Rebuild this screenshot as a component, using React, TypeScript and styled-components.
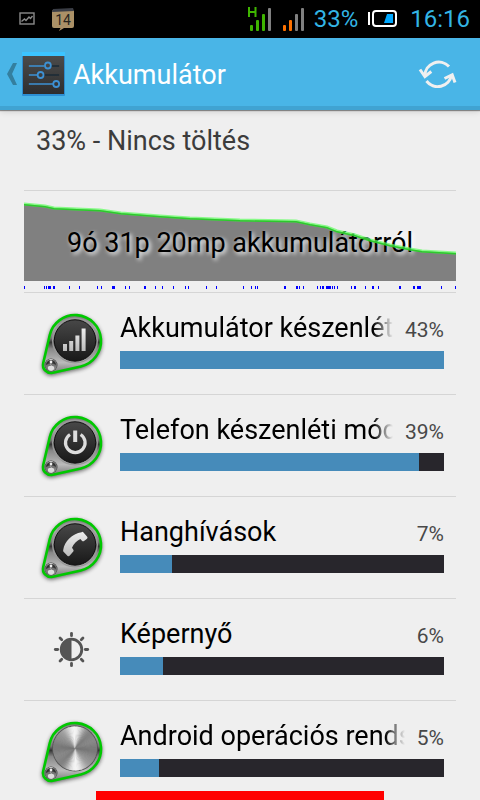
import React, { useId } from 'react';
import styled, { createGlobalStyle } from 'styled-components';

const GlobalStyle = createGlobalStyle`
  *, *::before, *::after { box-sizing: border-box; }
  body {
    margin: 0;
    background: #efefef;
    font-family: Roboto, 'Noto Sans', sans-serif;
    color: #000;
  }
`;

const Page = styled.div`
  height: 100vh;
  display: flex;
  flex-direction: column;
  overflow: hidden;
`;

const StatusBar = styled.header`
  display: flex;
  align-items: center;
  justify-content: space-between;
  flex: none;
  height: 38px;
  padding: 0 10px 0 18px;
  background: #000;
  color: #33b5e5;
  font-size: 24px;
  line-height: 40px;
`;

const StatusGroup = styled.div<{ $gap: number }>`
  display: flex;
  align-items: center;
  gap: ${(p) => p.$gap}px;
`;

const Clock = styled.time`
  margin-left: 4px;
`;

const ActionBar = styled.div`
  display: flex;
  align-items: center;
  flex: none;
  height: 72px;
  padding: 4px 22px 0 5px;
  background: #49b5e7;
  border-bottom: 4px solid #40a3d2;
  box-shadow: 0 1px 1px rgba(0, 0, 0, 0.4), 0 2px 6px rgba(0, 0, 0, 0.12);
  z-index: 1;
`;

const BackButton = styled.button`
  display: flex;
  align-items: center;
  gap: 4px;
  padding: 0;
  border: 0;
  background: none;
`;

const Title = styled.h1`
  flex: 1;
  margin: 2px 0 0 8px;
  color: #fff;
  font-size: 27px;
  line-height: 32px;
  font-weight: 400;
`;

const RefreshButton = styled.button`
  display: flex;
  padding: 0;
  border: 0;
  background: none;
`;

const Content = styled.main`
  flex: 1;
  min-height: 0;
  overflow: hidden;
  padding: 0 24px;
`;

const ChargeState = styled.p`
  margin: 0;
  height: 80px;
  padding: 14px 12px 0;
  color: #3c3c3c;
  font-size: 27px;
  line-height: 34px;
`;

const HistoryPanel = styled.section`
  display: grid;
  height: 102px;
  border-top: 1px solid #d5d5d5;

  > * { grid-area: 1 / 1; }
`;

const Plot = styled.svg`
  width: 100%;
  height: 101px;
  display: block;
`;

const Duration = styled.p`
  margin: 0;
  padding-top: 35px;
  text-align: center;
  white-space: nowrap;
  font-size: 27px;
  line-height: 34px;
  text-shadow: 2px 2px 4px #fff;
`;

const UsageList = styled.ul`
  margin: 0;
  padding: 0;
  list-style: none;
`;

const UsageRow = styled.li`
  display: flex;
  align-items: center;
  gap: 12px;
  height: 102px;
  padding: 0 12px;
  border-top: 1px solid #d5d5d5;
`;

const UsageBody = styled.div`
  flex: 1;
  min-width: 0;
  padding-bottom: 8px;
`;

const UsageHead = styled.div`
  display: flex;
  align-items: baseline;
  gap: 12px;
  margin-bottom: 6px;
`;

const UsageName = styled.span<{ $fade: boolean }>`
  flex: 1;
  min-width: 0;
  overflow: hidden;
  white-space: nowrap;
  font-size: 27px;
  line-height: 34px;
  mask-image: ${(p) => (p.$fade ? 'linear-gradient(to left, transparent, #000 20px)' : 'none')};
`;

const UsagePercent = styled.span`
  color: #484848;
  font-size: 21px;
  line-height: 26px;
`;

const UsageMeter = styled.div`
  height: 18px;
  background: #28262c;
`;

const UsageFill = styled.div`
  height: 18px;
  background: #468bba;
`;

const BottomMarker = styled.div`
  position: fixed;
  bottom: 0;
  left: 20%;
  right: 20%;
  height: 9px;
  background: #f00;
`;

type Glyph = 'signal' | 'power' | 'phone' | 'metal';

const wedges = Array.from({ length: 90 }, (_, i) => {
  const a = (i / 90) * Math.PI * 2;
  const b = ((i + 1.5) / 90) * Math.PI * 2;
  const shade = Math.min(
    245,
    Math.round(162 - 50 * Math.cos(2 * (a + 0.12)) + 22 * Math.cos(4 * a + 0.4) - 12 * Math.cos(6 * a))
  );
  return {
    d: `M0 0L${Math.cos(a)} ${Math.sin(a)}L${Math.cos(b)} ${Math.sin(b)}Z`,
    fill: `rgb(${shade},${shade},${shade})`,
  };
});

function BrushedDisc({ x, y, r }: { x: number; y: number; r: number }) {
  return (
    <g transform={`translate(${x} ${y}) scale(${r})`}>
      {wedges.map((w, i) => (
        <path key={i} d={w.d} fill={w.fill} />
      ))}
    </g>
  );
}

const drop =
  'M13.7 27.2A26 26 0 1 1 44.8 58.4L16.8 64.8A8 8 0 0 1 7.2 55.2Z';

function DropIcon({ glyph }: { glyph: Glyph }) {
  const id = useId();
  return (
    <svg width="72" height="72" viewBox="0 0 72 72" aria-hidden="true">
      <defs>
        <filter id={`${id}s`} x="-20%" y="-20%" width="140%" height="140%">
          <feGaussianBlur stdDeviation="2" />
        </filter>
        <linearGradient id={`${id}m`} x1="0" y1="0" x2="0" y2="1">
          <stop offset="0" stopColor="#777" />
          <stop offset="0.22" stopColor="#aaa" />
          <stop offset="0.4" stopColor="#777" />
          <stop offset="0.47" stopColor="#333" />
          <stop offset="0.58" stopColor="#888" />
          <stop offset="0.82" stopColor="#bbb" />
          <stop offset="1" stopColor="#777" />
        </linearGradient>
        <linearGradient id={`${id}d`} x1="0" y1="0" x2="0" y2="1">
          <stop offset="0" stopColor="#484848" />
          <stop offset="1" stopColor="#181818" />
        </linearGradient>
        <linearGradient id={`${id}g`} x1="0" y1="0" x2="0" y2="1">
          <stop offset="0" stopColor="#eee" />
          <stop offset="1" stopColor="#bbb" />
        </linearGradient>
      </defs>
      <path d={drop} transform="translate(0 1.5)" fill="#000" stroke="#000" strokeWidth="2" opacity="0.6" filter={`url(#${id}s)`} />
      <path d={drop} fill={`url(#${id}m)`} stroke="#00c800" strokeWidth="2.6" />
      <circle cx="15" cy="57" r="6.5" fill="#444" />
      <BrushedDisc x={15} y={57} r={5.8} />
      <path d="M10 57a5 5 0 0 1 10 0l-3-1.500h-4z" fill="#333" />
      <circle cx="15" cy="54" r="1.4" fill="#eee" />
      <ellipse cx="15" cy="60" rx="3.2" ry="2.2" fill="#ddd" />
      {glyph === 'metal' ? (
        <>
          <circle cx="39" cy="32.5" r="23" fill="#555" />
          <BrushedDisc x={39} y={32.5} r={22} />
        </>
      ) : (
        <>
          <circle cx="39" cy="32.5" r="22.3" fill="none" stroke="#999" strokeWidth="1.4" />
          <circle cx="39" cy="32.5" r="20.7" fill={`url(#${id}d)`} stroke="#111" strokeWidth="1" />
        </>
      )}
      {glyph === 'signal' && (
        <path d="M27 36h4v7h-4zM33.2 33h4v10h-4zM39.4 27.5h4v15.5h-4zM45.6 20.5h4v22.5h-4z" fill={`url(#${id}g)`} />
      )}
      {glyph === 'power' && (
        <g fill="none" stroke="#ddd" strokeWidth="3.2">
          <path d="M34 24.5A9.8 9.8 0 1 0 44.6 24.5" />
          <path d="M39.2 20.500v11.500" strokeWidth="4" />
        </g>
      )}
      {glyph === 'phone' && (
        <path
          d="M45.6 20.2Q46.600 19.400 47.500 20.500L51.200 24.800Q52 26 51 26.800L47.700 29.200Q46.700 29.600 45.900 28.700L44.400 27.100C41 28.500 37.500 32 36 35.800L37.200 37.500Q38 38.500 37.300 39.500L33.800 43.600Q32.800 44.700 31.600 44L27.800 40Q26.800 39.200 27.200 37.900C28.500 29.300 36 21.600 45.600 20.200Z"
          fill={`url(#${id}g)`}
        />
      )}
    </svg>
  );
}

function BrightnessIcon() {
  return (
    <svg width="72" height="72" viewBox="0 0 72 72" aria-hidden="true">
      <g transform="translate(35.5 35.5)" stroke="#555" fill="none">
        <circle r="10.3" strokeWidth="2.8" />
        <path d="M0 -10A10 10 0 0 0 0 10Z" fill="#555" stroke="none" />
        {[0, 45, 90, 135, 180, 225, 270, 315].map((a) => (
          <path key={a} d="M0 -13.8V-16.2" strokeWidth="2.8" strokeLinecap="round" transform={`rotate(${a})`} />
        ))}
      </g>
    </svg>
  );
}

function SettingsIcon() {
  return (
    <svg width="43" height="44" viewBox="0 0 44 44" preserveAspectRatio="none" aria-hidden="true">
      <defs>
        <linearGradient id="tile" x1="0" y1="0" x2="0" y2="1">
          <stop offset="0" stopColor="#4b4b4b" />
          <stop offset="1" stopColor="#2e2e2e" />
        </linearGradient>
      </defs>
      <rect width="44" height="44" rx="1" fill="#2c8fd3" />
      <path d="M0 0h44v4H0z" fill="#3cc4ff" />
      <rect x="1" y="4" width="42" height="38" fill="url(#tile)" />
      <g fill="none" stroke="#1a2a36" strokeWidth="1.5">
        <path d="M30 14h8M23 23h15M38 32h1" />
      </g>
      <g fill="none" stroke="#3d91d4" strokeWidth="1.6">
        <path d="M7 14h16M7 23h9M7 32h25" />
        <circle cx="26.500" cy="13.500" r="3" strokeWidth="1.8" />
        <circle cx="19" cy="23" r="3" strokeWidth="1.8" />
        <circle cx="35" cy="32" r="3" strokeWidth="1.8" />
      </g>
    </svg>
  );
}

function RefreshIcon() {
  return (
    <svg width="40" height="36" viewBox="0 0 40 36" fill="none" stroke="#f0f0f0" strokeWidth="3" aria-hidden="true">
      <path d="M31 10.500A14 14 0 0 0 6.800 20" />
      <path d="M8.500 25A14 14 0 0 0 33.500 19" />
      <path d="M2 13.500L6.900 20.500L13.300 15.500" />
      <path d="M26.500 22.500L34.200 18.800L37 26.500" />
    </svg>
  );
}

function SignalIcon({ level, color, network }: { level: number; color: string; network?: string }) {
  return (
    <svg width="24" height="26" viewBox="0 0 24 26" aria-label={network ? `Térerő ${network}` : 'Térerő'}>
      {[6, 11, 17, 23].map((h, i) => (
        <rect key={h} x={2 + i * 6} y={25 - h} width="3" height={h} rx="1" fill={i < level ? color : '#808080'} />
      ))}
      {network && <path d="M1 1V11M7.500 1V11M1 6H7.500" fill="none" stroke={color} strokeWidth="2" />}
    </svg>
  );
}

const historyPoints =
  '0,13 21,15 30,17 76,19 97,22 136,25 166,27 216,29 272,30 286,33 303,36 313,40 331,44 346,49 366,54 386,58 398,60 432,62';

const wakeTicks: [number, number][] = [
  [0, 1], [20, 1], [22, 1], [24, 3], [29, 2], [45, 1], [55, 1], [73, 1], [77, 1], [88, 3],
  [101, 1], [105, 1], [120, 2], [131, 1], [138, 1], [149, 1], [161, 1], [164, 1], [182, 1],
  [192, 1], [219, 1], [227, 1], [231, 1], [233, 1], [260, 2], [272, 2], [275, 1], [279, 1],
  [293, 1], [296, 1], [298, 2], [302, 5], [308, 1], [310, 1], [313, 1], [327, 1], [330, 2],
  [341, 1], [348, 2], [354, 1], [375, 2], [389, 2], [393, 4], [417, 1], [431, 1],
];

const usage: { name: string; percent: number; fill: number; icon: Glyph | 'brightness'; fade?: boolean }[] = [
  { name: 'Akkumulátor készenléti', percent: 43, fill: 100, icon: 'signal', fade: true },
  { name: 'Telefon készenléti módban', percent: 39, fill: 92.3, icon: 'power', fade: true },
  { name: 'Hanghívások', percent: 7, fill: 16, icon: 'phone' },
  { name: 'Képernyő', percent: 6, fill: 13.3, icon: 'brightness' },
  { name: 'Android operációs rendszer', percent: 5, fill: 12, icon: 'metal', fade: true },
];

export default function App() {
  return (
    <Page>
      <GlobalStyle />
      <StatusBar>
        <StatusGroup $gap={16}>
          <svg width="18" height="14" viewBox="0 0 18 14" fill="none" stroke="#8a8a8a" aria-label="Kép">
            <rect x="2" y="1" width="14" height="11" strokeWidth="1.4" />
            <path d="M3.500 9.500L6.500 7L8 8.500L11 5L12.500 6.500L14.500 4" strokeWidth="1.4" />
          </svg>
          <svg width="24" height="24" viewBox="0 0 24 24" aria-label="Naptár">
            <path d="M0 4L2 2H20L22 4V19Q22 21 20 21H12L7 24L8.500 21H2Q0 21 0 19Z" fill="#ab9167" />
            <path d="M0 5L1 2L21 1L22 4Z" fill="#3a3d45" />
            <text x="11" y="18" textAnchor="middle" fontSize="14" fill="#29251e">14</text>
          </svg>
        </StatusGroup>
        <StatusGroup $gap={9}>
          <SignalIcon level={3} color="#3fb500" network="H" />
          <SignalIcon level={2} color="#ff7200" />
          <span>33%</span>
          <svg width="30" height="20" viewBox="0 0 30 20" fill="none" stroke="#fff" strokeWidth="2" aria-label="Akkumulátor">
            <path d="M2 3V16" />
            <rect x="6" y="2" width="23" height="15" rx="3" />
            <path d="M17 14L20 5H26V14Z" fill="#00a8ff" stroke="none" />
          </svg>
          <Clock>16:16</Clock>
        </StatusGroup>
      </StatusBar>
      <ActionBar>
        <BackButton aria-label="Vissza">
          <svg width="13" height="22" viewBox="0 0 13 22" aria-hidden="true">
            <path d="M8 0H12L7 11L12 22H8L2 11Z" fill="#347f9f" />
          </svg>
          <SettingsIcon />
        </BackButton>
        <Title>Akkumulátor</Title>
        <RefreshButton aria-label="Frissítés">
          <RefreshIcon />
        </RefreshButton>
      </ActionBar>
      <Content>
        <ChargeState>33% - Nincs töltés</ChargeState>
        <HistoryPanel>
          <Plot viewBox="0 0 432 101" preserveAspectRatio="none" aria-hidden="true">
            <polygon points={`${historyPoints} 432,90 0,90`} fill="#808080" />
            {wakeTicks.map(([x, w]) => (
              <rect key={x} x={x} y="95" width={w} height="3" fill="#00f" />
            ))}
          </Plot>
          <Duration>9ó 31p 20mp akkumulátorról</Duration>
          <Plot viewBox="0 0 432 101" preserveAspectRatio="none" aria-hidden="true">
            <polyline points={historyPoints} fill="none" stroke="#5cff5c" strokeWidth="3" strokeOpacity="0.7" />
            <polyline points={historyPoints} fill="none" stroke="#1fc41f" strokeWidth="1.4" strokeOpacity="0.8" transform="translate(0 0.8)" />
          </Plot>
        </HistoryPanel>
        <UsageList>
          {usage.map((u) => (
            <UsageRow key={u.name}>
              {u.icon === 'brightness' ? <BrightnessIcon /> : <DropIcon glyph={u.icon} />}
              <UsageBody>
                <UsageHead>
                  <UsageName $fade={!!u.fade}>{u.name}</UsageName>
                  <UsagePercent>{u.percent}%</UsagePercent>
                </UsageHead>
                <UsageMeter role="progressbar" aria-label={u.name} aria-valuenow={u.percent}>
                  <UsageFill style={{ width: `${u.fill}%` }} />
                </UsageMeter>
              </UsageBody>
            </UsageRow>
          ))}
        </UsageList>
      </Content>
      <BottomMarker />
    </Page>
  );
}
